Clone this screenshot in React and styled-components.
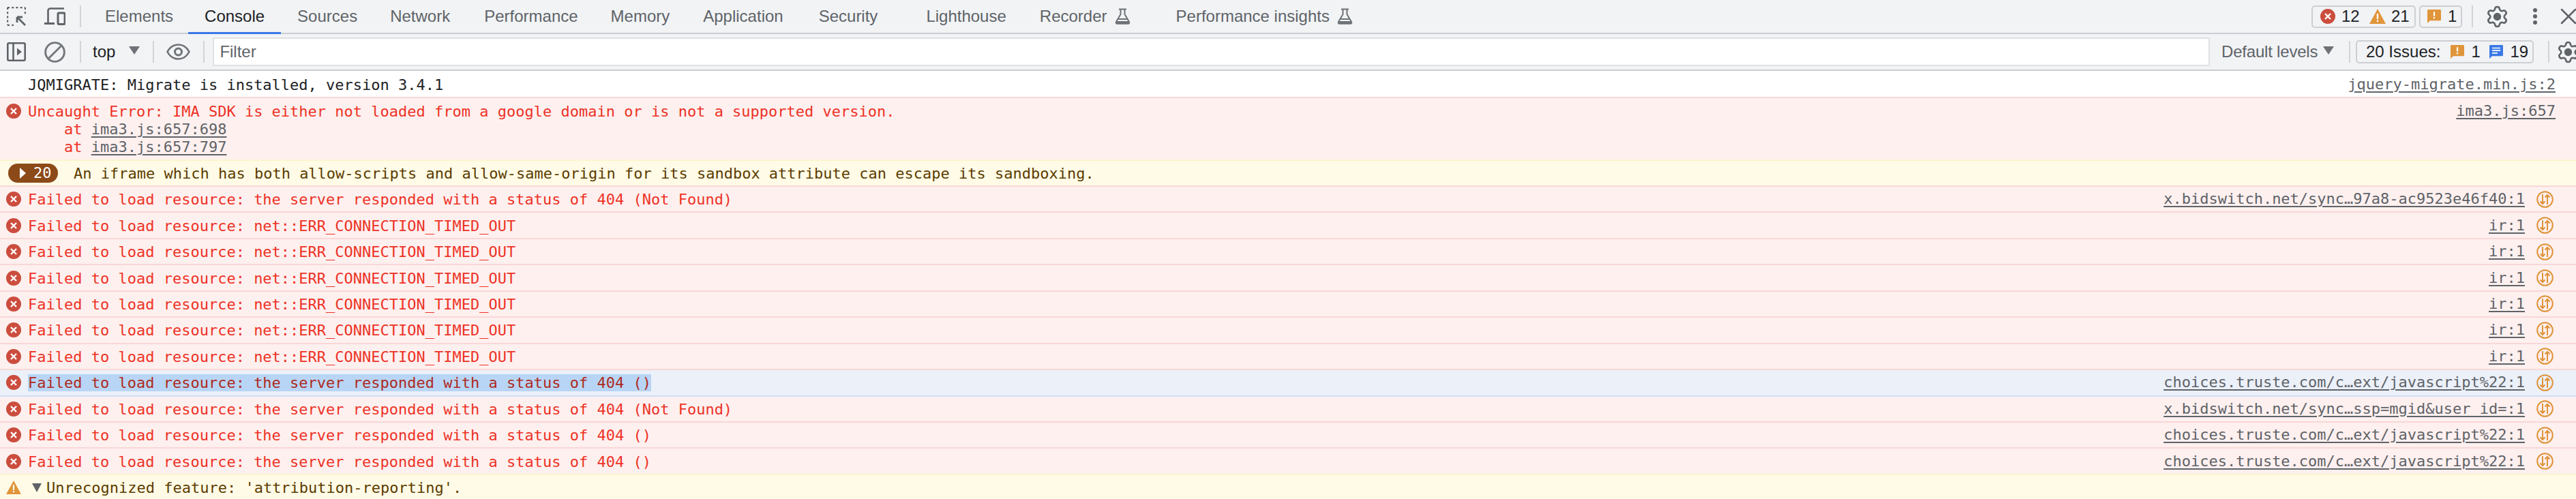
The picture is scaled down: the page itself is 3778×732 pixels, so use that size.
import React from "react";
import styled, { createGlobalStyle } from "styled-components";
import { Settings, X } from "lucide-react";

const GlobalStyle = createGlobalStyle`
  html, body {
    margin: 0;
    padding: 0;
    background: #fff;
    overflow: hidden;
  }
`;

const Page = styled.div`
  width: 3778px;
  height: 732px;
  overflow: hidden;
  font-family: "Liberation Sans", Arial, sans-serif;
  font-size: 24px;
  color: #202124;
`;

const Bar = styled.div`
  display: flex;
  align-items: center;
  box-sizing: border-box;
  background: #f1f3f5;
  border-bottom: 2px solid #cbcdd4;
  height: ${(p) => p.$height}px;
  padding-left: 10px;
`;

const Divider = styled.div`
  flex: none;
  width: 2px;
  height: 32px;
  background: #d2d4d8;
  margin-left: ${(p) => p.$left || 0}px;
`;

const IconWrap = styled.div`
  flex: none;
  display: flex;
  margin-left: ${(p) => p.$left || 0}px;
  margin-right: ${(p) => p.$right || 0}px;
`;

const TabStrip = styled.div`
  flex: none;
  display: flex;
  margin-left: 11px;
  margin-right: auto;
`;

const Tab = styled.div`
  position: relative;
  flex: none;
  display: flex;
  align-items: center;
  gap: 11px;
  height: 48px;
  padding: 0 24px;
  margin-left: ${(p) => p.$left || 0}px;
  color: ${(p) => (p.$active ? "#202124" : "#5f6368")};

  &::after {
    content: "";
    display: ${(p) => (p.$active ? "block" : "none")};
    position: absolute;
    left: 0;
    right: 0;
    bottom: -2px;
    height: 3px;
    background: #3b78e7;
  }
`;

const CountBox = styled.div`
  flex: none;
  display: flex;
  align-items: center;
  box-sizing: border-box;
  height: ${(p) => p.$height}px;
  width: ${(p) => p.$width}px;
  padding-left: ${(p) => p.$pad}px;
  margin-left: ${(p) => p.$left || 0}px;
  border: 2px solid #cdcfd4;
  border-radius: 5px;
`;

const Count = styled.span`
  margin-left: ${(p) => p.$left}px;
  width: ${(p) => p.$width}px;
`;

const ContextLabel = styled.div`
  flex: none;
  margin-left: 17px;
  color: #202124;
`;

const FilterBox = styled.div`
  flex: 1;
  box-sizing: border-box;
  height: 42px;
  margin-left: 12px;
  padding-left: 8px;
  line-height: 38px;
  background: #fff;
  border: 2px solid #e0e1e4;
  color: #5f6368;
`;

const LevelsLabel = styled.div`
  flex: none;
  width: 142px;
  margin-left: 17px;
  white-space: nowrap;
  letter-spacing: -0.2px;
  color: #5f6368;
`;

const Caret = styled.div`
  flex: none;
  width: 0;
  height: 0;
  margin-left: ${(p) => p.$left}px;
  margin-bottom: 4px;
  border-left: 8px solid transparent;
  border-right: 8px solid transparent;
  border-top: 12px solid #6e7276;
`;

const GearClip = styled.div`
  flex: none;
  display: flex;
  width: 29px;
  overflow: hidden;
  margin-left: 10px;
`;

const Gear = styled(Settings)`
  flex: none;
  circle {
    fill: #5f6368;
  }
`;

const Log = styled.div`
  font-family: "DejaVu Sans Mono", "Liberation Mono", monospace;
  font-size: 22px;
  line-height: 26px;
`;

const rowColors = {
  info: { bg: "#ffffff", text: "#202124", line: "transparent" },
  error: { bg: "#fdf0ef", text: "#ee3226", line: "#f9d6d6" },
  warn: { bg: "#fffbe6", text: "#5c3c00", line: "#fdf4cc" },
  selected: { bg: "#ebf0f9", text: "#ee3226", line: "#f9d6d6" },
};

const Row = styled.div`
  display: flex;
  align-items: ${(p) => (p.$tall ? "flex-start" : "center")};
  box-sizing: border-box;
  height: ${(p) => p.$height}px;
  padding-left: 9px;
  padding-top: ${(p) => p.$top || 0}px;
  background: ${(p) => rowColors[p.$kind].bg};
  color: ${(p) => rowColors[p.$kind].text};
  border-top: ${(p) => (p.$flat ? 0 : 2)}px solid
    ${(p) => p.$line || rowColors[p.$kind].line};
`;

const RowIcon = styled.div`
  flex: none;
  display: flex;
  width: 22px;
  height: 22px;
  margin-right: ${(p) => (p.$flush ? 0 : 10)}px;
  margin-top: ${(p) => (p.$tall ? 2 : 0)}px;
`;

const Message = styled.div`
  flex: 1;
  white-space: pre;
  position: relative;
  top: 1px;
`;

const Selected = styled.span`
  background: #b8d5f5;
  color: #ad2a22;
`;

const Trace = styled.div`
  white-space: pre;
`;

const Source = styled.span`
  flex: none;
  color: #5f6368;
  text-decoration: underline;
  text-decoration-thickness: 2px;
  text-underline-offset: 3px;
  margin-right: ${(p) => p.$right || 0}px;
`;

const TraceLink = styled.span`
  color: #5f6368;
  text-decoration: underline;
  text-decoration-thickness: 2px;
  text-underline-offset: 3px;
`;

const IssueSlot = styled.div`
  flex: none;
  display: flex;
  width: 75px;
  padding-left: 17px;
  box-sizing: border-box;
`;

const RepeatBadge = styled.div`
  flex: none;
  display: flex;
  align-items: center;
  box-sizing: border-box;
  width: 73px;
  height: 28px;
  margin: 0 23px 0 3px;
  padding-left: 17px;
  gap: 11px;
  border-radius: 14px;
  background: #8c4a18;
  color: #fff;
`;

const RepeatArrow = styled.div`
  width: 0;
  height: 0;
  border-top: 8px solid transparent;
  border-bottom: 8px solid transparent;
  border-left: 9px solid #fff;
`;

const Disclosure = styled.div`
  flex: none;
  width: 0;
  height: 0;
  margin: 2px 7px 0 16px;
  border-left: 7px solid transparent;
  border-right: 7px solid transparent;
  border-top: 13px solid #5f6368;
`;

const InspectIcon = () => (
  <svg width="28" height="28" viewBox="0 0 28 28" fill="none" stroke="#5f6368" strokeWidth="2.4">
    <path d="M1 1h26M1 1v26M27 1v11M1 27h9" strokeDasharray="3 3.2" />
    <path d="M15 15l12 12M15 15h8M15 15v8" strokeWidth="2.8" />
  </svg>
);

const DeviceIcon = () => (
  <svg width="32" height="26" viewBox="0 0 32 26" fill="none" stroke="#5f6368" strokeWidth="2.6">
    <path d="M30 1.5H9.5a3 3 0 0 0-3 3V22" />
    <path d="M1 23.5h15" strokeWidth="3" />
    <rect x="21" y="8" width="10" height="16.5" rx="1.5" strokeWidth="3" />
  </svg>
);

const SidebarIcon = () => (
  <svg width="28" height="28" viewBox="0 0 28 28" fill="none" stroke="#5f6368" strokeWidth="2.6">
    <rect x="1.3" y="1.3" width="25.4" height="25.4" rx="2" />
    <path d="M9.5 1v26" />
    <path d="M15 8.5l7 5.5-7 5.5z" fill="#5f6368" stroke="none" />
  </svg>
);

const BlockIcon = () => (
  <svg width="31" height="31" viewBox="0 0 30 30" fill="none" stroke="#73777b" strokeWidth="2.8">
    <circle cx="15" cy="15" r="13.4" />
    <path d="M24.5 5.5l-19 19" />
  </svg>
);

const EyeIcon = () => (
  <svg width="35" height="24" viewBox="0 0 35 24" fill="none" stroke="#6e7276" strokeWidth="2.6">
    <path d="M1.5 12C5 5.5 10.500 1.500 17.500 1.500S30 5.500 33.500 12C30 18.500 24.500 22.500 17.500 22.500S5 18.500 1.500 12z" />
    <circle cx="17.500" cy="12" r="5" strokeWidth="3" />
  </svg>
);

const FlaskIcon = () => (
  <svg width="23" height="24" viewBox="0 0 23 24" fill="none" stroke="#6e7276" strokeWidth="2">
    <path d="M6 1.500h11M8.500 1.500v7.500L2 20a1.800 1.800 0 0 0 1.600 2.800h15.800A1.800 1.800 0 0 0 21 20L14.500 9V1.500" />
    <path d="M5 16h13" />
    <path d="M3 19h17l1 3.500H2z" fill="#6e7276" stroke="none" />
  </svg>
);

const ErrorIcon = () => (
  <svg width="22" height="22" viewBox="0 0 22 22">
    <circle cx="11" cy="11" r="11" fill="#cb4d3e" />
    <path d="M7 7l8 8M15 7l-8 8" stroke="#fff" strokeWidth="2.4" />
  </svg>
);

const WarnIcon = () => (
  <svg width="24" height="22" viewBox="0 0 24 22">
    <path d="M12 0l12 22H0z" fill="#e0953a" />
    <path d="M12 7v8M12 16.500v2.500" stroke="#fff" strokeWidth="2.4" />
  </svg>
);

const IssueBubble = ({ color = "#e0953a", lines }) => (
  <svg width="20" height="20" viewBox="0 0 20 22" preserveAspectRatio="none">
    <path d="M1.500 0h17A1.500 1.500 0 0 1 20 1.500v15a1.500 1.500 0 0 1-1.500 1.500H4l-4 4V1.500A1.500 1.500 0 0 1 1.500 0z" fill={color} />
    {lines ? (
      <path d="M4 5h12M4 9h12M4 13h8" stroke="#fff" strokeWidth="1.800" />
    ) : (
      <path d="M10 3.500v7M10 12v2.500" stroke="#fff" strokeWidth="2.200" />
    )}
  </svg>
);

const DotsIcon = () => (
  <svg width="8" height="26" viewBox="0 0 8 26" fill="#5f6368">
    <circle cx="4" cy="4" r="3" />
    <circle cx="4" cy="13" r="3" />
    <circle cx="4" cy="22" r="3" />
  </svg>
);

const IssueLinkIcon = () => (
  <svg width="25" height="25" viewBox="0 0 25 25" fill="none" stroke="#df9339" strokeWidth="2">
    <circle cx="12.500" cy="12.500" r="11.300" />
    <path d="M9 5v14M5.500 15.500L9 19l3.500-3.500M16 20V6M12.500 9.500L16 6l3.500 3.500" />
  </svg>
);

const tabs = [
  { name: "Elements" },
  { name: "Console", active: true, left: -2 },
  { name: "Sources" },
  { name: "Network" },
  { name: "Performance", left: 2 },
  { name: "Memory" },
  { name: "Application", left: 1 },
  { name: "Security", left: 4 },
  { name: "Lighthouse", left: 23 },
  { name: "Recorder", flask: true, left: 1 },
  { name: "Performance insights", flask: true, left: 19 },
];

const notFound = "Failed to load resource: the server responded with a status of 404 (Not Found)";
const noStatus = "Failed to load resource: the server responded with a status of 404 ()";
const timedOut = "Failed to load resource: net::ERR_CONNECTION_TIMED_OUT";

const requests = [
  { text: notFound, source: "x.bidswitch.net/sync…97a8-ac9523e46f40:1" },
  { text: timedOut, source: "ir:1" },
  { text: timedOut, source: "ir:1" },
  { text: timedOut, source: "ir:1" },
  { text: timedOut, source: "ir:1" },
  { text: timedOut, source: "ir:1" },
  { text: timedOut, source: "ir:1" },
  { text: noStatus, source: "choices.truste.com/c…ext/javascript%22:1", selected: true },
  { text: notFound, source: "x.bidswitch.net/sync…ssp=mgid&user_id=:1", afterSelected: true },
  { text: noStatus, source: "choices.truste.com/c…ext/javascript%22:1" },
  { text: noStatus, source: "choices.truste.com/c…ext/javascript%22:1" },
];

export default function App() {
  return (
    <Page>
      <GlobalStyle />
      <Bar $height={50}>
        <IconWrap>
          <InspectIcon />
        </IconWrap>
        <IconWrap $left={26}>
          <DeviceIcon />
        </IconWrap>
        <Divider $left={21} />
        <TabStrip>
          {tabs.map((tab) => (
            <Tab key={tab.name} $active={tab.active} $left={tab.left}>
              {tab.name}
              {tab.flask && <FlaskIcon />}
            </Tab>
          ))}
        </TabStrip>
        <CountBox $width={153} $height={33} $pad={11}>
          <ErrorIcon />
          <Count $left={9} $width={41}>12</Count>
          <WarnIcon />
          <Count $left={8} $width={27}>21</Count>
        </CountBox>
        <CountBox $width={63} $height={33} $pad={10} $left={5}>
          <IssueBubble />
          <Count $left={10} $width={14}>1</Count>
        </CountBox>
        <Divider $left={14} />
        <IconWrap $left={18}>
          <Gear size={35} color="#5f6368" strokeWidth={1.8} />
        </IconWrap>
        <IconWrap $left={34}>
          <DotsIcon />
        </IconWrap>
        <IconWrap $left={25} $right={-9}>
          <X size={40} color="#5f6368" strokeWidth={1.5} />
        </IconWrap>
      </Bar>

      <Bar $height={54}>
        <IconWrap>
          <SidebarIcon />
        </IconWrap>
        <IconWrap $left={27}>
          <BlockIcon />
        </IconWrap>
        <Divider $left={21} />
        <ContextLabel>top</ContextLabel>
        <Caret $left={20} />
        <Divider $left={19} />
        <IconWrap $left={18}>
          <EyeIcon />
        </IconWrap>
        <Divider $left={19} />
        <FilterBox>Filter</FilterBox>
        <LevelsLabel>Default levels</LevelsLabel>
        <Caret $left={7} />
        <Divider $left={22} />
        <CountBox $width={261} $height={34} $pad={13} $left={8}>
          20 Issues:
          <IconWrap $left={15}>
            <IssueBubble />
          </IconWrap>
          <Count $left={10} $width={27}>1</Count>
          <IssueBubble color="#3b78e7" lines />
          <Count $left={10} $width={27}>19</Count>
        </CountBox>
        <Divider $left={21} />
        <GearClip>
          <Gear size={35} color="#5f6368" strokeWidth={1.8} />
        </GearClip>
      </Bar>

      <Log>
        <Row $kind="info" $height={38} $flat $top={2}>
          <RowIcon />
          <Message>JQMIGRATE: Migrate is installed, version 3.4.1</Message>
          <Source $right={30}>jquery-migrate.min.js:2</Source>
        </Row>

        <Row $kind="error" $height={92} $tall $top={6}>
          <RowIcon $tall>
            <ErrorIcon />
          </RowIcon>
          <Message>
            Uncaught Error: IMA SDK is either not loaded from a google domain or is not a supported version.
            <Trace>
              {"    at "}
              <TraceLink>ima3.js:657:698</TraceLink>
            </Trace>
            <Trace>
              {"    at "}
              <TraceLink>ima3.js:657:797</TraceLink>
            </Trace>
          </Message>
          <Source $right={30}>ima3.js:657</Source>
        </Row>

        <Row $kind="warn" $height={38}>
          <RepeatBadge>
            <RepeatArrow />
            20
          </RepeatBadge>
          <Message>
            An iframe which has both allow-scripts and allow-same-origin for its sandbox attribute can escape its sandboxing.
          </Message>
        </Row>

        {requests.map((request, index) => (
          <Row
            key={index}
            $kind={request.selected ? "selected" : "error"}
            $height={38.45}
            $line={request.afterSelected ? "#cfe0f7" : undefined}
          >
            <RowIcon>
              <ErrorIcon />
            </RowIcon>
            <Message>
              {request.selected ? <Selected>{request.text}</Selected> : request.text}
            </Message>
            <Source>{request.source}</Source>
            <IssueSlot>
              <IssueLinkIcon />
            </IssueSlot>
          </Row>
        ))}

        <Row $kind="warn" $height={38}>
          <RowIcon $flush>
            <WarnIcon />
          </RowIcon>
          <Disclosure />
          <Message>Unrecognized feature: 'attribution-reporting'.</Message>
        </Row>
      </Log>
    </Page>
  );
}
